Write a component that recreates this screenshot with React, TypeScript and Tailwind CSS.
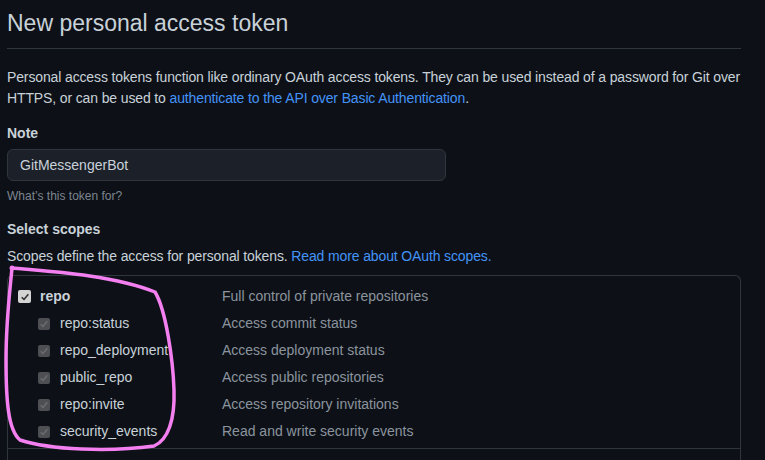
import type { FC } from "react"

// Scope rows shown in the "Select scopes" box
const scopes = [
  { name: "repo", desc: "Full control of private repositories", parent: true },
  { name: "repo:status", desc: "Access commit status" },
  { name: "repo_deployment", desc: "Access deployment status" },
  { name: "public_repo", desc: "Access public repositories" },
  { name: "repo:invite", desc: "Access repository invitations" },
  { name: "security_events", desc: "Read and write security events" },
]

const Check: FC<{ parent?: boolean }> = ({ parent }) => (
  <span
    className={`flex items-center justify-center rounded-[2px] ${
      parent ? "w-[13px] h-[13px] bg-[#d4d4d4]" : "w-[12px] h-[12px] bg-[#4d4f52]"
    }`}
  >
    <svg viewBox="0 0 12 12" className="w-[10px] h-[10px]">
      <path
        d="M2 6.2 L4.8 9 L10 2.8"
        fill="none"
        stroke={parent ? "#2b2b2b" : "#6b6d70"}
        strokeWidth="1.8"
      />
    </svg>
  </span>
)

const App: FC = () => {
  return (
    <div
      className="relative w-[765px] h-[460px] overflow-hidden bg-[#0d1117] text-[#c9d1d9] text-[14px]"
      style={{ fontFamily: '"Liberation Sans", Arial, sans-serif' }}
    >
      <div className="w-[734px] ml-[7px]">
        {/* Header */}
        <h1 className="text-[23px] leading-[30px] pt-[8px] pb-[10px] border-b border-[#30363d] text-[#c9d1d9]">
          New personal access token
        </h1>

        <p className="mt-[18px] leading-[21px] tracking-[-0.13px]">
          Personal access tokens function like ordinary OAuth access tokens. They can be used instead of a password for Git over
          HTTPS, or can be used to{" "}
          <a className="text-[#4493f8]">authenticate to the API over Basic Authentication</a>.
        </p>

        {/* Note */}
        <div className="mt-[14px] font-bold leading-[20px]">Note</div>
        <div className="mt-[6px] w-[439px] h-[32px] rounded-[6px] border border-[#30363d] bg-[#1c2129] flex items-center px-[12px]">
          GitMessengerBot
        </div>
        <div className="mt-[7px] text-[12px] leading-[16px] text-[#7d8590]">What’s this token for?</div>

        {/* Scopes */}
        <div className="mt-[15px] font-bold leading-[20px]">Select scopes</div>
        <p className="mt-[7px] leading-[20px] tracking-[-0.13px]">
          Scopes define the access for personal tokens.{" "}
          <a className="text-[#4493f8]">Read more about OAuth scopes.</a>
        </p>

        <div className="mt-[9px] rounded-t-[6px] border border-[#30363d] border-b-0">
          <div className="pt-[7px] pb-[3px] border-b border-[#30363d]">
            {scopes.map((s) => (
              <div key={s.name} className="flex items-center h-[27px]">
                <div className={`flex items-center w-[214px] ${s.parent ? "pl-[10px] gap-[9px]" : "pl-[30px] gap-[10px]"}`}>
                  <Check parent={s.parent} />
                  <span className={s.parent ? "font-bold" : ""}>{s.name}</span>
                </div>
                <span className="text-[#8b949e]">{s.desc}</span>
              </div>
            ))}
          </div>
          <div className="h-[20px]" />
        </div>
      </div>

      {/* Hand-drawn highlight */}
      <svg className="absolute left-0 top-0 pointer-events-none" width="765" height="460">
        <circle cx="12" cy="268" r="2.5" fill="#f47ff0" />
        <path
          d="M12 268 C 60 272, 115 276, 155 292 C 166 310, 173 360, 174 390 C 175 420, 168 440, 154 446 C 110 452, 50 450, 20 440 C 8 430, 6 400, 6 360 C 6 320, 10 290, 12 268"
          fill="none"
          stroke="#f47ff0"
          strokeWidth="3.5"
          strokeLinecap="round"
        />
      </svg>
    </div>
  )
}

export default App
